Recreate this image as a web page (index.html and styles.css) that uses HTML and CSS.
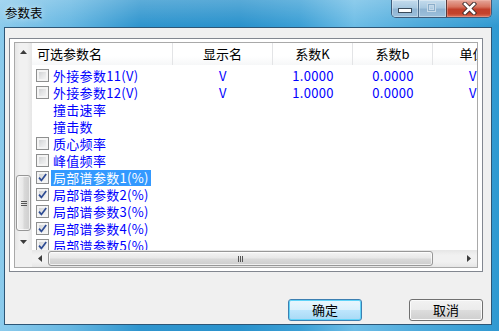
FILE: index.html
```html
<!DOCTYPE html>
<html>
<head>
<meta charset="utf-8">
<link rel="stylesheet" href="styles.css">
</head>
<body>
<div class="window">
  <div class="titlebar">
    <div class="title">参数表</div>
    <div class="caption-btns">
      <div class="cb cb-min"><span class="min-glyph"></span></div>
      <div class="cb cb-max"><span class="max-glyph"></span></div>
      <div class="cb cb-close">
        <svg class="close-glyph" width="15" height="13" viewBox="0 0 15 13">
          <path d="M3 2 L12 11 M12 2 L3 11" stroke="#3a2a2a" stroke-width="4.4" stroke-linecap="square" fill="none"/>
          <path d="M3 2 L12 11 M12 2 L3 11" stroke="#ffffff" stroke-width="2.6" stroke-linecap="square" fill="none"/>
        </svg>
      </div>
    </div>
  </div>
  <div class="client">
    <div class="listbox">
      <div class="inner">
        <div class="vscroll">
          <div class="arrow-v">
            <svg width="7" height="4" viewBox="0 0 7 4"><polygon points="3.5,0 7,4 0,4" fill="#3c3c3c"/></svg>
          </div>
          <div class="vtrack">
            <div class="vthumb">
              <svg width="6" height="5" viewBox="0 0 6 5"><path d="M0 0.5H6M0 2.5H6M0 4.5H6" stroke="#555" stroke-width="1"/></svg>
            </div>
          </div>
          <div class="arrow-v">
            <svg width="7" height="4" viewBox="0 0 7 4"><polygon points="0,0 7,0 3.5,4" fill="#3c3c3c"/></svg>
          </div>
        </div>
        <div class="view">
          <div class="header">
            <div class="hc c1 left">可选参数名</div>
            <div class="hc c2">显示名</div>
            <div class="hc c3">系数K</div>
            <div class="hc c4">系数b</div>
            <div class="hc c5">单位</div>
          </div>
          <div class="rows">
            <div class="row">
              <div class="cell c1"><span class="chk"></span><span class="name">外接参数11(V)</span></div>
              <div class="cell c2">V</div><div class="cell c3">1.0000</div><div class="cell c4">0.0000</div><div class="cell c5">V</div>
            </div>
            <div class="row">
              <div class="cell c1"><span class="chk"></span><span class="name">外接参数12(V)</span></div>
              <div class="cell c2">V</div><div class="cell c3">1.0000</div><div class="cell c4">0.0000</div><div class="cell c5">V</div>
            </div>
            <div class="row">
              <div class="cell c1"><span class="chk hidden"></span><span class="name">撞击速率</span></div>
            </div>
            <div class="row">
              <div class="cell c1"><span class="chk hidden"></span><span class="name">撞击数</span></div>
            </div>
            <div class="row">
              <div class="cell c1"><span class="chk"></span><span class="name">质心频率</span></div>
            </div>
            <div class="row">
              <div class="cell c1"><span class="chk"></span><span class="name">峰值频率</span></div>
            </div>
            <div class="row">
              <div class="cell c1"><span class="chk on"><svg width="9" height="9" viewBox="0 0 9 9"><path d="M1 4.6 L3.4 7.4 L8.2 1" stroke="#2d4b93" stroke-width="1.7" fill="none"/></svg></span><span class="name selected">局部谱参数1(%)</span></div>
            </div>
            <div class="row">
              <div class="cell c1"><span class="chk on"><svg width="9" height="9" viewBox="0 0 9 9"><path d="M1 4.6 L3.4 7.4 L8.2 1" stroke="#2d4b93" stroke-width="1.7" fill="none"/></svg></span><span class="name">局部谱参数2(%)</span></div>
            </div>
            <div class="row">
              <div class="cell c1"><span class="chk on"><svg width="9" height="9" viewBox="0 0 9 9"><path d="M1 4.6 L3.4 7.4 L8.2 1" stroke="#2d4b93" stroke-width="1.7" fill="none"/></svg></span><span class="name">局部谱参数3(%)</span></div>
            </div>
            <div class="row">
              <div class="cell c1"><span class="chk on"><svg width="9" height="9" viewBox="0 0 9 9"><path d="M1 4.6 L3.4 7.4 L8.2 1" stroke="#2d4b93" stroke-width="1.7" fill="none"/></svg></span><span class="name">局部谱参数4(%)</span></div>
            </div>
            <div class="row">
              <div class="cell c1"><span class="chk on"><svg width="9" height="9" viewBox="0 0 9 9"><path d="M1 4.6 L3.4 7.4 L8.2 1" stroke="#2d4b93" stroke-width="1.7" fill="none"/></svg></span><span class="name">局部谱参数5(%)</span></div>
            </div>
          </div>
        </div>
        <div class="corner"></div>
        <div class="hscroll">
          <div class="arrow-h">
            <svg width="4" height="7" viewBox="0 0 4 7"><polygon points="0,3.5 4,0 4,7" fill="#3c3c3c"/></svg>
          </div>
          <div class="hthumb">
            <svg width="5" height="6" viewBox="0 0 5 6"><path d="M0.5 0V6M2.5 0V6M4.5 0V6" stroke="#555" stroke-width="1"/></svg>
          </div>
          <div class="htrack"></div>
          <div class="arrow-h">
            <svg width="4" height="7" viewBox="0 0 4 7"><polygon points="0,0 4,3.5 0,7" fill="#3c3c3c"/></svg>
          </div>
        </div>
      </div>
    </div>
    <div class="buttons">
      <div class="btn btn-default">确定</div>
      <div class="btn">取消</div>
    </div>
  </div>
</div>
</body>
</html>
```
FILE: styles.css
```css
* { box-sizing: border-box; margin: 0; padding: 0; }
html, body { width: 499px; height: 331px; overflow: hidden; }
body {
  font-family: "Noto Sans CJK SC", "Noto Sans", sans-serif;
  font-size: 13px;
  color: #000;
}
.window {
  width: 499px;
  height: 331px;
  display: flex;
  flex-direction: column;
  background:
    linear-gradient(180deg, rgba(255,255,255,0.22), rgba(255,255,255,0) 26px),
    linear-gradient(90deg, #8ccbec 0%, #66b7e2 14%, #2f95ce 28%, #2a92cc 48%, #3b9fd5 60%, #6dbde6 71%, #4eaadb 84%, #3099d1 100%);
}
.titlebar {
  height: 27px;
  flex: none;
  display: flex;
  align-items: flex-start;
  padding-right: 7px;
}
.title {
  padding-left: 5px;
  padding-top: 4px;
  font-size: 12.5px;
  line-height: 17px;
  color: #000;
  text-shadow: 0 0 6px rgba(255,255,255,0.8);
}
.caption-btns {
  margin-left: auto;
  display: flex;
  height: 18px;
  border: 1px solid #3e5c7a;
  border-top: none;
  border-radius: 0 0 5px 5px;
  overflow: hidden;
}
.cb { height: 17px; position: relative; }
.cb-min, .cb-max {
  background: linear-gradient(180deg, #c4dced 0%, #a9c9e1 45%, #8fb4d2 55%, #9dc0dc 100%);
  box-shadow: inset 0 0 0 1px rgba(255,255,255,0.35);
}
.cb-min { width: 26px; }
.cb-max { width: 28px; border-left: 1px solid #4f6e8c; }
.cb-close {
  width: 45px;
  border-left: 1px solid #5a3a3a;
  background: linear-gradient(180deg, #e5a79b 0%, #d7735f 40%, #c2402b 55%, #c4432c 80%, #d9735c 100%);
  box-shadow: inset 0 0 0 1px rgba(255,200,190,0.35);
}
.min-glyph {
  position: absolute;
  left: 6px;
  top: 8px;
  width: 14px;
  height: 5px;
  background: #fff;
  border: 1px solid #3a4a5a;
}
.max-glyph {
  position: absolute;
  left: 8px;
  top: 3px;
  width: 9px;
  height: 9px;
  border: 1px solid #c9dbe9;
  background: rgba(255,255,255,0.15);
  box-shadow: inset 0 0 0 1px #8aaecb, inset 0 0 0 2px #c5d9ea;
}
.close-glyph { position: absolute; left: 15px; top: 2px; }

.client {
  flex: 1;
  margin: 0 7px 6px 4px;
  border: 1px solid #2d5676;
  background: #f0f0f0;
  padding: 10px 8px 0 4px;
  display: flex;
  flex-direction: column;
}
.listbox {
  height: 234px;
  flex: none;
  border: 1px solid #828790;
  background: #fff;
  padding: 3px 4px 3px 4px;
}
.inner {
  height: 226px;
  border: 1px solid #a9a9a9;
  display: grid;
  grid-template-columns: 17px 1fr;
  grid-template-rows: 1fr 17px;
  overflow: hidden;
}
.vscroll {
  display: flex;
  flex-direction: column;
  background: linear-gradient(90deg, #e6e6e6 0%, #f1f1f1 30%, #f1f1f1 70%, #e6e6e6 100%);
}
.arrow-v {
  height: 17px;
  flex: none;
  display: flex;
  align-items: center;
  justify-content: center;
}
.vtrack { flex: 1; }
.vthumb {
  margin: 115px 1px 0 1px;
  height: 56px;
  border: 1px solid #979797;
  border-radius: 3px;
  background: linear-gradient(90deg, #f4f4f4 0%, #e8e8e8 45%, #d9d9d9 55%, #cdcdcd 100%);
  box-shadow: inset 0 0 0 1px rgba(255,255,255,0.7);
  display: flex;
  align-items: center;
  justify-content: center;
}
.view {
  overflow: hidden;
  background: #fff;
}
.header {
  height: 22px;
  display: flex;
  background: linear-gradient(180deg, #ffffff 0%, #ffffff 60%, #f6f7f8 100%);
}
.hc {
  flex: none;
  line-height: 22px;
  text-align: center;
  border-right: 1px solid #e3e4e6;
  white-space: nowrap;
}
.hc.left { text-align: left; padding-left: 5px; }
.c1 { width: 141px; }
.c2 { width: 100px; }
.c3 { width: 80px; }
.c4 { width: 80px; }
.c5 { width: 80px; }
.rows { padding-top: 2px; }
.row {
  height: 17px;
  display: flex;
  color: #0000ff;
}
.cell {
  flex: none;
  height: 17px;
  line-height: 17px;
  text-align: center;
  white-space: nowrap;
  letter-spacing: 0.3px;
}
.cell.c1 {
  display: flex;
  align-items: center;
  padding-left: 4px;
  text-align: left;
}
.chk {
  width: 13px;
  height: 13px;
  flex: none;
  border: 1px solid #8e8f8f;
  background: linear-gradient(135deg, #c6c8ca 0%, #e4e5e6 50%, #fafafa 100%);
  box-shadow: inset 0 0 0 1px #f4f4f4, inset 0 0 0 2px #f4f4f4;
  display: flex;
  align-items: center;
  justify-content: center;
}
.chk.hidden { visibility: hidden; }
.chk svg { display: block; }
.name {
  margin-left: 2px;
  padding: 0 2px;
  line-height: 16px;
  height: 16px;
}
.name.selected { background: #3399ff; color: #fff; }
.corner { background: #f0f0f0; }
.hscroll {
  display: flex;
  align-items: stretch;
  background: linear-gradient(180deg, #e6e6e6 0%, #f1f1f1 30%, #f1f1f1 70%, #e6e6e6 100%);
}
.arrow-h {
  width: 16px;
  flex: none;
  display: flex;
  align-items: center;
  justify-content: center;
}
.arrow-h:last-child { width: 17px; }
.hthumb {
  width: 385px;
  flex: none;
  margin: 1px 0;
  border: 1px solid #979797;
  border-radius: 3px;
  background: linear-gradient(180deg, #f4f4f4 0%, #e8e8e8 45%, #d9d9d9 55%, #cdcdcd 100%);
  box-shadow: inset 0 0 0 1px rgba(255,255,255,0.7);
  display: flex;
  align-items: center;
  justify-content: center;
}
.htrack { flex: 1; }
.buttons {
  display: flex;
  justify-content: flex-end;
  gap: 47px;
  margin-top: 27px;
}
.btn {
  width: 74px;
  height: 22px;
  border: 1px solid #707070;
  border-radius: 3px;
  display: flex;
  align-items: center;
  justify-content: center;
  font-size: 13px;
  line-height: 20px;
  background: linear-gradient(180deg, #f2f2f2 0%, #ebebeb 50%, #dddddd 50%, #cfcfcf 100%);
  box-shadow: inset 0 0 0 1px #fbfbfb;
}
.btn-default {
  border-color: #3c7fb1;
  background: linear-gradient(180deg, #eaf6fd 0%, #d9f0fc 50%, #bee6fd 50%, #a7d9f5 100%);
  box-shadow: inset 0 0 0 1px #5fd3f8;
}
```
